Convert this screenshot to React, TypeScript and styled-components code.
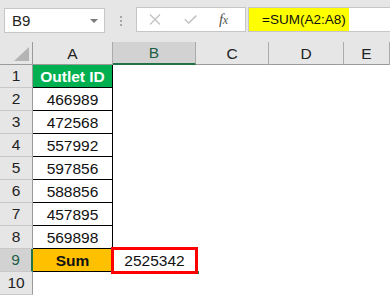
import React from "react";
import styled, { createGlobalStyle, css } from "styled-components";

const Global = createGlobalStyle`
  html, body { margin: 0; padding: 0; background: #ffffff; }
  body { font-family: "Liberation Sans", Arial, sans-serif; }
  * { box-sizing: border-box; }
`;

const Page = styled.div`
  width: 390px;
  height: 295px;
  overflow: hidden;
  background: #ffffff;
  display: flex;
  flex-direction: column;
`;

const Toolbar = styled.div`
  height: 42px;
  flex: 0 0 42px;
  background: #e6e6e6;
  display: flex;
  align-items: flex-start;
  padding: 7px 0 0 4px;
`;

const NameBox = styled.div`
  width: 101px;
  height: 25px;
  margin-top: 1px;
  background: #ffffff;
  border: 1px solid #c6c6c6;
  display: flex;
  align-items: center;
  justify-content: space-between;
  padding: 0 6px 0 7px;
  font-size: 15px;
  color: #222;
`;

const Caret = styled.span`
  width: 0;
  height: 0;
  border-left: 4px solid transparent;
  border-right: 4px solid transparent;
  border-top: 4px solid #7a7a7a;
`;

const Dots = styled.div`
  width: 31px;
  height: 25px;
  display: flex;
  flex-direction: column;
  align-items: center;
  justify-content: center;
  gap: 2px;
  padding-top: 2px;
`;

const Dot = styled.span`
  width: 2px;
  height: 2px;
  background: #a6a6a6;
`;

const FxBox = styled.div`
  width: 110px;
  height: 25px;
  background: #ffffff;
  border: 1px solid #c6c6c6;
  display: flex;
  align-items: center;
  padding-left: 12px;
  gap: 23px;
`;

const Fx = styled.span`
  font-family: "Liberation Serif", "Times New Roman", serif;
  font-style: italic;
  font-size: 15px;
  color: #555;
  margin-left: -1px;
  letter-spacing: -0.5px;
`;

const Sub = styled.span`
  font-size: 12px;
`;

const InputBox = styled.div`
  flex: 1;
  height: 25px;
  margin-left: 2px;
  background: #ffffff;
  border: 1px solid #c6c6c6;
  border-right: none;
  display: flex;
  align-items: stretch;
`;

const Highlight = styled.span`
  width: 100px;
  background: #ffff00;
  display: flex;
  align-items: center;
  padding-left: 13px;
  font-size: 13.5px;
  color: #111;
`;

const Grid = styled.div`
  display: grid;
  grid-template-columns: 33px 80px 83px 73px 75px 1fr;
  grid-auto-rows: 23px;
`;

const Corner = styled.div`
  background: #e6e6e6;
  border-right: 1px solid #9b9b9b;
  border-bottom: 1px solid #9b9b9b;
  position: relative;
  display: flex;
  align-items: flex-end;
  justify-content: flex-end;
  padding: 0 3px 3px 0;
`;

const ColHeader = styled.div<{ $selected?: boolean }>`
  background: ${(p) => (p.$selected ? "#d2d2d2" : "#e6e6e6")};
  border-right: 1px solid #ababab;
  border-bottom: ${(p) => (p.$selected ? "2px solid #217346" : "1px solid #9b9b9b")};
  color: ${(p) => (p.$selected ? "#1e5e47" : "#222")};
  font-size: 15.5px;
  display: flex;
  align-items: center;
  justify-content: center;
  padding-top: 1px;
`;

const RowHeader = styled.div<{ $selected?: boolean }>`
  background: ${(p) => (p.$selected ? "#d2d2d2" : "#e6e6e6")};
  border-bottom: 1px solid #c8c8c8;
  border-right: ${(p) => (p.$selected ? "2px solid #217346" : "1px solid #9b9b9b")};
  color: ${(p) => (p.$selected ? "#1e5e47" : "#222")};
  font-size: 15.5px;
  display: flex;
  align-items: center;
  justify-content: center;
`;

type Variant = "plain" | "title" | "value" | "sum" | "empty";

const Cell = styled.div<{ $variant: Variant }>`
  position: relative;
  font-size: 15.5px;
  color: #111;
  display: flex;
  align-items: center;
  justify-content: center;
  padding-top: 1px;
  ${(p) =>
    p.$variant !== "empty" &&
    p.$variant !== "value" &&
    css`
      border-right: 1px solid #000;
      border-bottom: 1px solid #000;
    `}
  ${(p) =>
    p.$variant === "title" &&
    css`
      background: #00b050;
      color: #ffffff;
      font-weight: bold;
    `}
  ${(p) =>
    p.$variant === "sum" &&
    css`
      background: #ffc000;
      font-weight: bold;
    `}
  ${(p) =>
    p.$variant === "value" &&
    css`
      &::after {
        content: "";
        position: absolute;
        left: -2px;
        top: -2px;
        right: -2px;
        bottom: -2px;
        border: 3px solid #ff0000;
      }
    `}
`;

const FillHandle = styled.span`
  position: absolute;
  right: -4px;
  bottom: -3px;
  width: 5px;
  height: 5px;
  background: #217346;
  border: 1px solid #ffffff;
  z-index: 0;
`;

const columns = ["A", "B", "C", "D", "E"];
const ids = ["466989", "472568", "557992", "597856", "588856", "457895", "569898"];

export default function App() {
  const rows: React.ReactNode[] = [];
  for (let r = 1; r <= 10; r++) {
    rows.push(
      <RowHeader key={`h${r}`} $selected={r === 9}>
        {r}
      </RowHeader>
    );
    for (let c = 0; c < 5; c++) {
      let variant: Variant = "empty";
      let text = "";
      if (c === 0 && r === 1) {
        variant = "title";
        text = "Outlet ID";
      } else if (c === 0 && r >= 2 && r <= 8) {
        variant = "plain";
        text = ids[r - 2];
      } else if (c === 0 && r === 9) {
        variant = "sum";
        text = "Sum";
      } else if (c === 1 && r === 9) {
        variant = "value";
        text = "2525342";
      }
      rows.push(
        <Cell key={`c${r}-${c}`} $variant={variant}>
          {text}
          {variant === "value" && <FillHandle />}
        </Cell>
      );
    }
  }

  return (
    <Page>
      <Global />
      <Toolbar>
        <NameBox>
          <span>B9</span>
          <Caret />
        </NameBox>
        <Dots>
          <Dot />
          <Dot />
          <Dot />
        </Dots>
        <FxBox>
          <svg width="12" height="11" viewBox="0 0 12 11">
            <path d="M1 0.5 L11 10.5 M11 0.5 L1 10.5" stroke="#c4c4c4" strokeWidth="1.4" fill="none" />
          </svg>
          <svg width="13" height="9" viewBox="0 0 13 9">
            <path d="M0.8 4.2 L4.6 8 L12.3 0.6" stroke="#c4c4c4" strokeWidth="1.6" fill="none" />
          </svg>
          <Fx>
            f<Sub>x</Sub>
          </Fx>
        </FxBox>
        <InputBox>
          <Highlight>=SUM(A2:A8)</Highlight>
        </InputBox>
      </Toolbar>
      <Grid>
        <Corner>
          <svg width="15" height="14" viewBox="0 0 15 14">
            <polygon points="15,0 15,14 0,14" fill="#b4b4b4" />
          </svg>
        </Corner>
        {columns.map((col) => (
          <ColHeader key={col} $selected={col === "B"}>
            {col}
          </ColHeader>
        ))}
        {rows}
      </Grid>
    </Page>
  );
}
